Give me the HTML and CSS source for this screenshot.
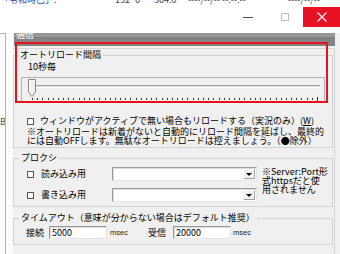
FILE: index.html
```html
<!DOCTYPE html>
<html lang="ja">
<head>
<meta charset="utf-8">
<link rel="stylesheet" href="styles.css">
</head>
<body>
<div class="screen">
  <div class="bgrow">
    <span class="bc bc-title">「令和時已」:</span><span class="bc bc-n1">132</span><span class="bc bc-n2">0</span><span class="bc bc-n3">304.0</span><span class="bc bc-d1">----/--/-- --:--:--</span><span class="bc bc-d2">----/--/--</span>
  </div>
  <div class="titlebar">
    <div class="tb-btn"><span class="min-line"></span></div>
    <div class="tb-btn"><span class="max-box"></span></div>
    <div class="tb-btn close">
      <svg width="10" height="10" viewBox="0 0 10 10"><path d="M0.5 0.5L9.5 9.5M9.5 0.5L0.5 9.5" stroke="#fff" stroke-width="1.1" fill="none"/></svg>
    </div>
  </div>
  <div class="main">
    <div class="leftstrip"><div class="strip-frame"><span class="strip-char">B</span></div></div>
    <div class="dialog">
      <div class="tabbar"><span>通信</span></div>
      <div class="tabpage">
        <fieldset class="grp g1">
          <legend>オートリロード間隔</legend>
          <div class="rate">10秒毎</div>
          <div class="slider">
            <svg width="304" height="25" viewBox="0 0 304 25">
              <rect x="0.5" y="0.5" width="303" height="24" fill="none" stroke="#777" stroke-dasharray="1 1"/>
              <rect x="8" y="8" width="291" height="1" fill="#a0a0a0"/>
              <rect x="8" y="9" width="291" height="1" fill="#dcdcdc"/>
              <rect x="8" y="10" width="291" height="1" fill="#ffffff"/>
              <path d="M11.5 21v2M16.5 21v2M21.5 21v2M27.5 21v2M32.5 21v2M37.5 21v2M42.5 21v2M47.5 21v2M52.5 21v2M58.5 21v2M63.5 21v2M68.5 21v2M73.5 21v2M78.5 21v2M84.5 21v2M89.5 21v2M94.5 21v2M99.5 21v2M104.5 21v2M109.5 21v2M115.5 21v2M120.5 21v2M125.5 21v2M130.5 21v2M135.5 21v2M141.5 21v2M146.5 21v2M151.5 21v2M156.5 21v2M161.5 21v2M166.5 21v2M172.5 21v2M177.5 21v2M182.5 21v2M187.5 21v2M192.5 21v2M198.5 21v2M203.5 21v2M208.5 21v2M213.5 21v2M218.5 21v2M223.5 21v2M229.5 21v2M234.5 21v2M239.5 21v2M244.5 21v2M249.5 21v2M255.5 21v2M260.5 21v2M265.5 21v2M270.5 21v2M275.5 21v2M280.5 21v2M286.5 21v2M291.5 21v2M296.5 20v4" stroke="#333" stroke-width="1" fill="none"/>
              <path d="M7.5 2.5H14.5V15L11 19.5L7.5 15Z" fill="#f0f0f0" stroke="#8a8a8a" stroke-width="1"/>
              <path d="M8.5 14.5V3.5H13.5" fill="none" stroke="#ffffff" stroke-width="1"/>
            </svg>
          </div>
          <div class="chkrow"><span class="chk"></span><span>ウィンドウがアクティブで無い場合もリロードする（実況のみ）(<u>W</u>)</span></div>
          <div class="note">※オートリロードは新着がないと自動的にリロード間隔を延ばし、最終的<br>には自動OFFします。無駄なオートリロードは控えましょう。（●除外）</div>
        </fieldset>
        <fieldset class="grp g2">
          <legend>プロクシ</legend>
          <div class="proxy">
            <div class="plabel"><span class="chk"></span><span>読み込み用</span></div>
            <div class="combo"><span class="cbtn"></span></div>
            <div class="pnote">※Server:Port形<br>式httpsだと使<br>用されません</div>
            <div class="plabel"><span class="chk"></span><span>書き込み用</span></div>
            <div class="combo"><span class="cbtn"></span></div>
          </div>
        </fieldset>
        <fieldset class="grp g3">
          <legend>タイムアウト（意味が分からない場合はデフォルト推奨）</legend>
          <div class="timeout">
            <span class="tlabel">接続</span>
            <span class="field f1">5000</span>
            <span class="unit u1">msec</span>
            <span class="tlabel">受信</span>
            <span class="field f2">20000</span>
            <span class="unit u2">msec</span>
          </div>
        </fieldset>
      </div>
    </div>
  </div>
  <div class="redbox"></div>
</div>
</body>
</html>
```

FILE: styles.css
```css
html, body {
  margin: 0;
  padding: 0;
  background: #fff;
}
body {
  font-family: "Noto Sans CJK JP", "Noto Sans", sans-serif;
  color: #000;
}
.screen {
  width: 340px;
  height: 254px;
  overflow: hidden;
  position: relative;
  background: #fff;
}

/* background list row, cut at top */
.bgrow {
  height: 7px;
  overflow: hidden;
  display: flex;
  white-space: nowrap;
  font-size: 9px;
  line-height: 10px;
  color: #444;
}
.bc {
  display: block;
  margin-top: -5px;
}
.bc-title { width: 115px; color: #1f4f9f; }
.bc-n1 { width: 20px; }
.bc-n2 { width: 19px; }
.bc-n3 { width: 34px; }
.bc-d1 { width: 100px; }

/* title bar */
.titlebar {
  height: 26px;
  display: flex;
  justify-content: flex-end;
  align-items: flex-start;
  background: #fff;
}
.tb-btn {
  width: 37px;
  height: 20px;
  display: flex;
  align-items: center;
  justify-content: center;
}
.min-line {
  width: 10px;
  height: 1px;
  background: #555;
}
.max-box {
  width: 8px;
  height: 8px;
  box-sizing: border-box;
  border: 1px solid #c0c0c0;
}
.close {
  background: #e81123;
}

/* main area */
.main {
  display: flex;
  height: 221px;
}
.leftstrip {
  width: 13px;
  background: #fbfbfb;
}
.strip-frame {
  width: 6px;
  height: 100%;
  box-sizing: border-box;
  border-top: 1px solid #b4b4b4;
  border-right: 1px solid #b4b4b4;
  padding-top: 83px;
  overflow: hidden;
}
.strip-char {
  display: block;
  font-size: 9px;
  line-height: 10px;
  color: #555;
}
.dialog {
  flex: 1;
  background: #f0f0f0;
}
.tabbar {
  margin-left: 1px;
  width: 321px;
  height: 13px;
  overflow: hidden;
  background: linear-gradient(#979797 0 4px, #828282 4px);
}
.tabbar span {
  display: block;
  color: #fff;
  font-size: 9px;
  line-height: 10px;
  margin: -3px 0 0 2px;
}
.tabpage {
  margin-top: 2px;
  width: 322px;
  height: 206px;
  box-sizing: border-box;
  border-top: 1px solid #d6d6d6;
  border-right: 1px solid #d6d6d6;
  padding-top: 1px;
}

/* group boxes */
.grp {
  margin: 0;
  padding: 0;
  min-width: 0;
  width: 320px;
  box-sizing: border-box;
  border: 1px solid #d3d3d3;
  font-size: 9px;
  line-height: 10px;
}
.grp legend {
  font-size: 9px;
  line-height: 10px;
  padding: 0 2px;
  margin-left: 4px;
  color: #000;
}
.g2 legend, .g3 legend { margin-left: 5px; }
.g1 { height: 98px; }
.g2 { height: 54px; margin-top: 5px; }
.g3 { height: 32px; margin-top: 6px; }

.rate {
  margin: 2px 0 0 14px;
}
.slider {
  margin: 5px 0 0 7px;
  width: 304px;
  height: 25px;
}
.slider svg { display: block; }

.chk {
  display: block;
  width: 7px;
  height: 7px;
  box-sizing: border-box;
  border: 1px solid #555;
  background: #fff;
  flex: none;
}
.chkrow {
  margin: 14px 0 0 13px;
  display: flex;
  align-items: center;
  gap: 6px;
  white-space: nowrap;
}
.note {
  margin: 1px 0 0 13px;
  line-height: 9px;
  white-space: nowrap;
}

/* proxy */
.proxy {
  display: grid;
  grid-template-columns: 80px 145px auto;
  grid-template-rows: 14px 14px;
  column-gap: 5px;
  row-gap: 7px;
  margin: 4px 0 0 13px;
}
.plabel {
  display: flex;
  align-items: center;
  gap: 7px;
  white-space: nowrap;
}
.combo {
  display: flex;
  justify-content: flex-end;
  box-sizing: border-box;
  background: #fff;
  border: 1px solid;
  border-color: #9a9a9a #e6e6e6 #e6e6e6 #9a9a9a;
  box-shadow: inset 1px 1px 0 #dcdcdc;
  padding: 1px;
}
.cbtn {
  width: 12px;
  box-sizing: border-box;
  background: #f0f0f0;
  border: 1px solid;
  border-color: #fff #a0a0a0 #a0a0a0 #fff;
  display: flex;
  align-items: center;
  justify-content: center;
}
.cbtn::after {
  content: "";
  border-left: 3px solid transparent;
  border-right: 3px solid transparent;
  border-top: 3px solid #000;
}
.pnote {
  grid-column: 3;
  grid-row: 1 / 3;
  line-height: 9px;
  white-space: nowrap;
}

/* timeout */
.timeout {
  display: flex;
  align-items: center;
  height: 13px;
  margin: 3px 0 0 12px;
  white-space: nowrap;
}
.field {
  display: block;
  width: 58px;
  height: 13px;
  box-sizing: border-box;
  background: #fff;
  border: 1px solid;
  border-color: #9a9a9a #e6e6e6 #e6e6e6 #9a9a9a;
  box-shadow: inset 1px 1px 0 #dcdcdc;
  padding-left: 2px;
  line-height: 11px;
  font-size: 9px;
  color: #000;
}
.f1 { margin-left: 5px; }
.f2 { margin-left: 7px; }
.unit {
  font-family: "Liberation Sans", Arial, sans-serif;
  font-size: 7.5px;
  color: #222;
}
.u1 { margin-left: 3px; width: 38px; }
.u2 { margin-left: 2px; }

/* annotation */
.redbox {
  position: absolute;
  left: 15px;
  top: 42px;
  width: 313px;
  height: 61px;
  box-sizing: border-box;
  border: 2px solid #e5141c;
}
```
